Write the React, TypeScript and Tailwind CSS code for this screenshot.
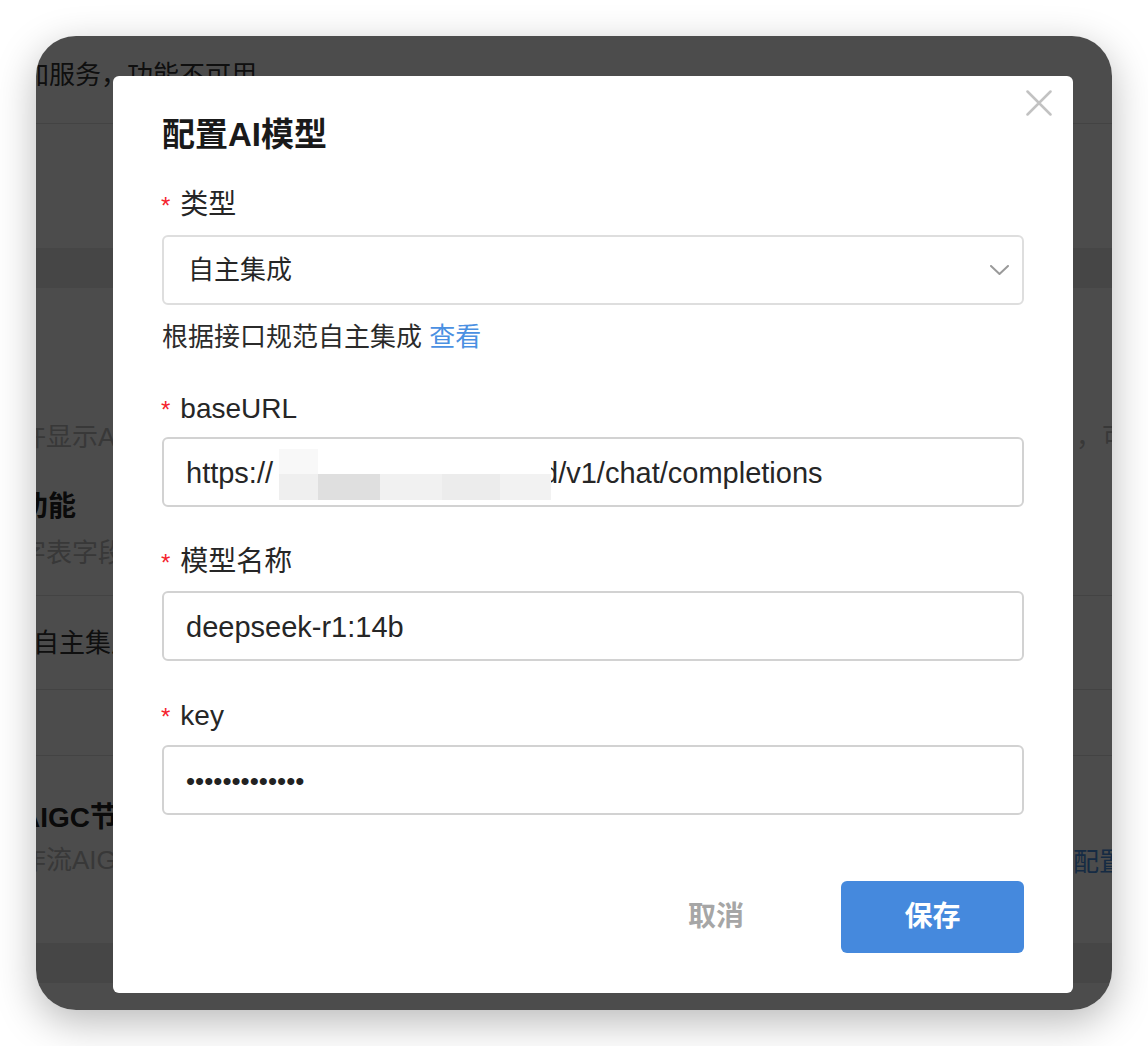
import React from "react";

function Label({ children, className = "" }: { children: React.ReactNode; className?: string }) {
  return (
    <div className={`flex items-baseline h-[40px] leading-[40px] ${className}`}>
      <span className="text-[24px] text-[#f5222d] mr-[10px] ml-[-1px]">*</span>
      <span className="text-[28px] text-[#262626]">{children}</span>
    </div>
  );
}

function Field({ children, className = "" }: { children: React.ReactNode; className?: string }) {
  return (
    <div
      className={`h-[70px] border-2 border-[#d2d2d2] rounded-[6px] flex items-center pl-[22px] pt-[3px] text-[29px] text-[#262626] whitespace-nowrap ${className}`}
    >
      {children}
    </div>
  );
}

function Mosaic() {
  return (
    <span className="relative z-10 inline-flex flex-col w-[272px] h-[51px] ml-[6px] mt-[1px] shrink-0">
      <span className="flex h-[25px]">
        <span className="w-[39px] bg-[#f8f8f8]" />
        <span className="flex-1 bg-white" />
      </span>
      <span className="flex h-[26px]">
        <span className="w-[39px] bg-[#efefef]" />
        <span className="w-[62px] bg-[#dfdfdf]" />
        <span className="w-[62px] bg-[#f1f1f1]" />
        <span className="w-[58px] bg-[#ececec]" />
        <span className="w-[51px] bg-[#f2f2f2]" />
      </span>
    </span>
  );
}

export default function App() {
  return (
    <div className="w-[1148px] h-[1046px] bg-white pt-[36px] pl-[36px] font-['Liberation_Sans','Noto_Sans_CJK_SC',sans-serif]">
      <div className="relative w-[1076px] h-[974px] rounded-[40px] overflow-hidden bg-white shadow-[0_12px_40px_rgba(0,0,0,0.28)]">
        {/* underlying page */}
        <div className="ml-[-16px] flex flex-col">
          <div className="h-[88px] border-b border-[#e2e2e2] pl-[3px] pt-[21px] text-[26px] leading-[36px] text-[#333] whitespace-nowrap">
            加服务，功能不可用
          </div>
          <div className="h-[124px]" />
          <div className="h-[40px] bg-[#e9e9e9]" />
          <div className="h-[308px] border-b border-[#e2e2e2] pt-[131px] flex flex-col">
            <div className="flex justify-between h-[36px] leading-[36px] text-[26px] text-[#bbbbbb]">
              <span className="flex-1 min-w-0 overflow-hidden whitespace-nowrap">许显示AI助手入口，开启后用户可以在应用中使用AI功能</span>
              <span className="w-[36px] shrink-0 whitespace-nowrap">，可以</span>
            </div>
            <div className="mt-[32px] h-[40px] leading-[40px] text-[28px] font-bold text-[#222] whitespace-nowrap">
              功能
            </div>
            <div className="mt-[8px] h-[36px] leading-[36px] text-[26px] text-[#bbbbbb] whitespace-nowrap">
              字表字段智能填充
            </div>
          </div>
          <div className="h-[94px] border-b border-[#e2e2e2] pt-[29px] pl-[13px] text-[26px] leading-[36px] text-[#333] whitespace-nowrap">
            自主集成
          </div>
          <div className="h-[66px] border-b border-[#e2e2e2]" />
          <div className="h-[187px] pt-[42px] flex flex-col">
            <div className="h-[40px] leading-[40px] text-[28px] font-bold text-[#222] whitespace-nowrap">
              AIGC节点
            </div>
            <div className="mt-[4px] flex justify-between h-[36px] leading-[36px] text-[26px]">
              <span className="flex-1 min-w-0 overflow-hidden whitespace-nowrap text-[#bbbbbb]">作流AIGC节点使用的AI模型</span>
              <span className="w-[39px] shrink-0 whitespace-nowrap text-[#4a90e2] mt-[2px]">配置</span>
            </div>
          </div>
          <div className="h-[40px] bg-[#e9e9e9]" />
        </div>

        {/* mask */}
        <div className="absolute inset-0 bg-black/70" />

        {/* modal */}
        <div className="absolute left-[77px] top-[40px] w-[960px] h-[917px] rounded-[6px] bg-white px-[49px] pt-[37px] flex flex-col">
          <button className="absolute right-[21px] top-[14px] w-[26px] h-[26px]" aria-label="close">
            <svg width="26" height="26" viewBox="0 0 26 26" fill="none" stroke="#c2c2c2" strokeWidth="2.5" strokeLinecap="round">
              <path d="M1.5 1.5 L24.5 24.5 M24.5 1.5 L1.5 24.5" />
            </svg>
          </button>

          <div className="text-[33px] font-bold leading-[44px] text-[#1a1a1a]">配置AI模型</div>

          <Label className="mt-[28px]">类型</Label>
          <div className="mt-[10px] h-[70px] border-2 border-[#dedede] rounded-[6px] flex items-center justify-between pl-[24px] pr-[13px]">
            <span className="text-[26px] text-[#262626] mt-[1px]">自主集成</span>
            <svg width="19" height="10" viewBox="0 0 19 10" fill="none" stroke="#9a9a9a" strokeWidth="2" strokeLinecap="round" strokeLinejoin="round">
              <path d="M1 1 L9.5 9 L18 1" />
            </svg>
          </div>

          <div className="mt-[14px] h-[36px] leading-[36px] text-[26px] text-[#2b2b2b] whitespace-nowrap">
            根据接口规范自主集成 <span className="text-[#4a90e2]">查看</span>
          </div>

          <Label className="mt-[34px]">baseURL</Label>
          <Field className="mt-[8px]">
            <span>https://</span>
            <Mosaic />
            <span className="ml-[-9px]">d/v1/chat/completions</span>
          </Field>

          <Label className="mt-[35px]">模型名称</Label>
          <Field className="mt-[9px]">deepseek-r1:14b</Field>

          <Label className="mt-[35px]">key</Label>
          <Field className="mt-[9px]">
            <span className="text-[26px] text-[#222]">•••••••••••••</span>
          </Field>

          <div className="mt-[66px] flex justify-end gap-[50px]">
            <button className="w-[150px] h-[72px] text-[28px] font-semibold text-[#a6a6a6]">取消</button>
            <button className="w-[183px] h-[72px] rounded-[6px] bg-[#4589dd] text-[28px] font-semibold text-white">保存</button>
          </div>
        </div>
      </div>
    </div>
  );
}
